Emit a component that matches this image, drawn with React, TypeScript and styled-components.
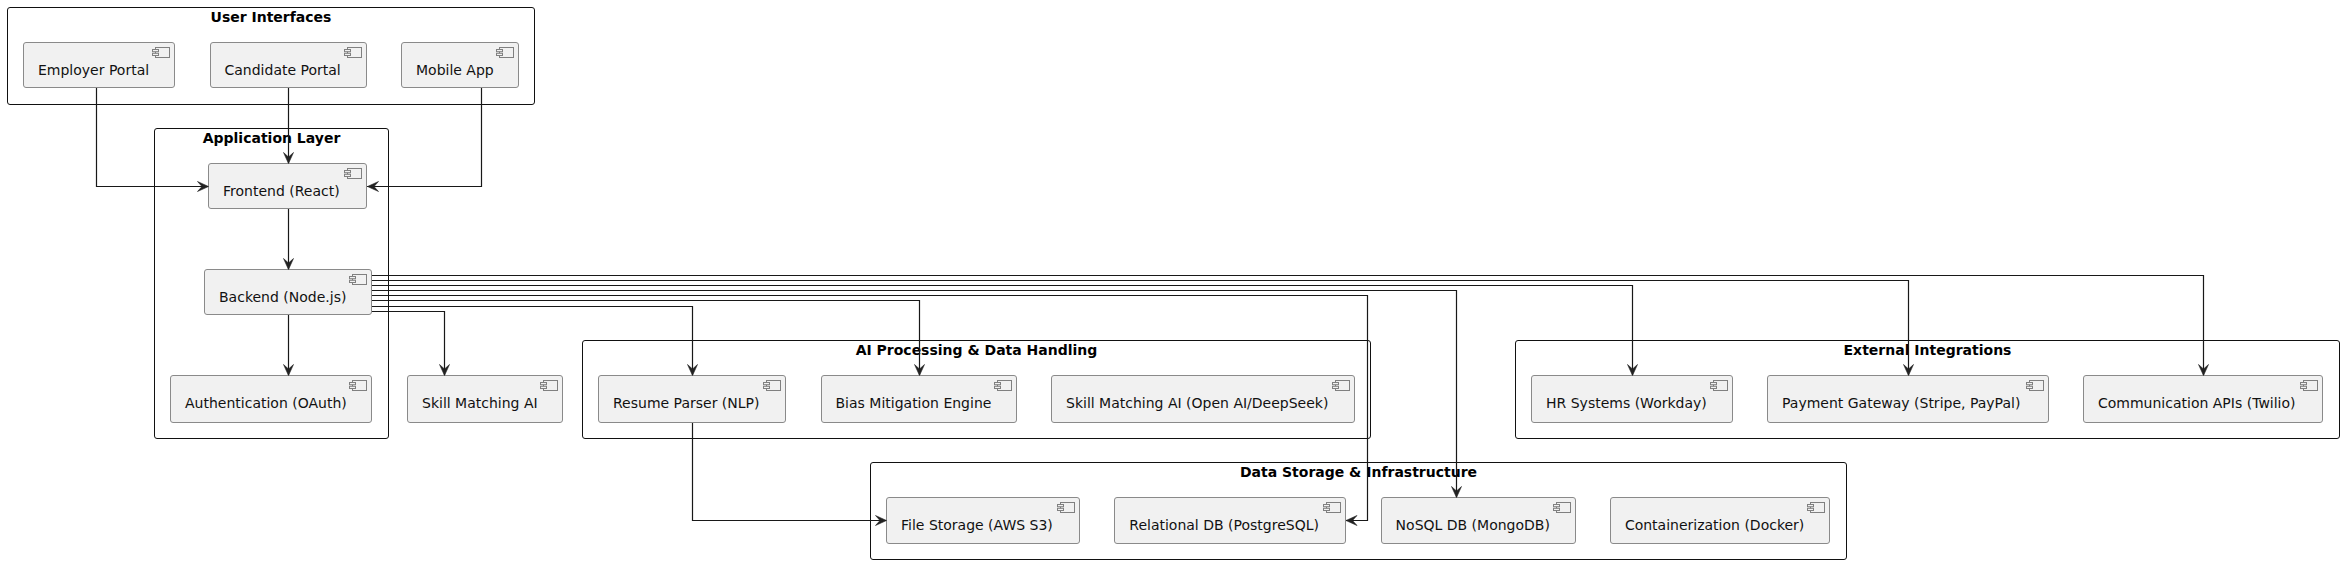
import React from 'react'
import styled, { createGlobalStyle } from 'styled-components'

interface NodeData {
  label: string
  w: number
  h: number
  inset?: number
}

interface GroupData {
  title: string
  x: number
  y: number
  w: number
  h: number
  gap: number
  stacked?: boolean
  nodes: NodeData[]
}

const groups: GroupData[] = [
  {
    title: 'User Interfaces',
    x: 7,
    y: 7,
    w: 528,
    h: 98,
    gap: 34.5,
    nodes: [
      { label: 'Employer Portal', w: 152, h: 46 },
      { label: 'Candidate Portal', w: 157, h: 46 },
      { label: 'Mobile App', w: 118, h: 46 },
    ],
  },
  {
    title: 'Application Layer',
    x: 154,
    y: 128,
    w: 235,
    h: 311,
    gap: 60,
    stacked: true,
    nodes: [
      { label: 'Frontend (React)', w: 159, h: 46, inset: 5 },
      { label: 'Backend (Node.js)', w: 168, h: 46 },
      { label: 'Authentication (OAuth)', w: 202, h: 48 },
    ],
  },
  {
    title: 'AI Processing & Data Handling',
    x: 582,
    y: 340,
    w: 789,
    h: 99,
    gap: 34.5,
    nodes: [
      { label: 'Resume Parser (NLP)', w: 188, h: 48 },
      { label: 'Bias Mitigation Engine', w: 196, h: 48 },
      { label: 'Skill Matching AI (Open AI/DeepSeek)', w: 304, h: 48 },
    ],
  },
  {
    title: 'External Integrations',
    x: 1515,
    y: 340,
    w: 825,
    h: 99,
    gap: 34,
    nodes: [
      { label: 'HR Systems (Workday)', w: 202, h: 48 },
      { label: 'Payment Gateway (Stripe, PayPal)', w: 282, h: 48 },
      { label: 'Communication APIs (Twilio)', w: 240, h: 48 },
    ],
  },
  {
    title: 'Data Storage & Infrastructure',
    x: 870,
    y: 462,
    w: 977,
    h: 98,
    gap: 34.3,
    nodes: [
      { label: 'File Storage (AWS S3)', w: 194, h: 47 },
      { label: 'Relational DB (PostgreSQL)', w: 232, h: 47 },
      { label: 'NoSQL DB (MongoDB)', w: 195, h: 47 },
      { label: 'Containerization (Docker)', w: 220, h: 47 },
    ],
  },
]

type Dir = 'down' | 'left' | 'right'

// polyline points, the tip is where the arrow head ends
const edges: { points: string; tip: [number, number]; dir: Dir }[] = [
  { points: '96.5,88 96.5,186.5 208,186.5', tip: [208.5, 186.5], dir: 'right' },
  { points: '288.5,88 288.5,163', tip: [288.5, 163.5], dir: 'down' },
  { points: '481.5,88 481.5,186.5 367,186.5', tip: [367.5, 186.5], dir: 'left' },
  { points: '288.5,209 288.5,269', tip: [288.5, 269.5], dir: 'down' },
  { points: '288.5,315 288.5,375', tip: [288.5, 375.5], dir: 'down' },
  { points: '372,311.5 444.5,311.5 444.5,375', tip: [444.5, 375.5], dir: 'down' },
  { points: '372,306.5 692.5,306.5 692.5,375', tip: [692.5, 375.5], dir: 'down' },
  { points: '372,300.5 919.5,300.5 919.5,375', tip: [919.5, 375.5], dir: 'down' },
  { points: '372,295.5 1367.5,295.5 1367.5,520.5 1346,520.5', tip: [1346, 520.5], dir: 'left' },
  { points: '372,290.5 1456.5,290.5 1456.5,497', tip: [1456.5, 497.5], dir: 'down' },
  { points: '372,285.5 1632.5,285.5 1632.5,375', tip: [1632.5, 375.5], dir: 'down' },
  { points: '372,280.5 1908.5,280.5 1908.5,375', tip: [1908.5, 375.5], dir: 'down' },
  { points: '372,275.5 2203.5,275.5 2203.5,375', tip: [2203.5, 375.5], dir: 'down' },
  { points: '692.5,423 692.5,520.5 886,520.5', tip: [886.5, 520.5], dir: 'right' },
]

const headPath = ([x, y]: [number, number], dir: Dir) => {
  if (dir === 'down') {
    return `M${x},${y} L${x + 5},${y - 11} L${x},${y - 6.5} L${x - 5},${y - 11} Z`
  }
  if (dir === 'right') {
    return `M${x},${y} L${x - 11},${y + 5} L${x - 6.5},${y} L${x - 11},${y - 5} Z`
  }
  return `M${x},${y} L${x + 11},${y + 5} L${x + 6.5},${y} L${x + 11},${y - 5} Z`
}

const DiagramNode: React.FC<{ node: NodeData }> = ({ node }) => (
  <NodeBox $w={node.w} $h={node.h} $inset={node.inset ?? 0}>
    <IconSvg viewBox="0 0 18 11" width="18" height="11">
      <rect x="3.5" y="0.5" width="14" height="10" />
      <rect x="0.5" y="2.5" width="6" height="2.2" />
      <rect x="0.5" y="6.3" width="6" height="2.2" />
    </IconSvg>
    <NodeLabel>{node.label}</NodeLabel>
  </NodeBox>
)

const App: React.FC = () => {
  return (
    <Canvas>
      <GlobalStyle />
      {groups.map(group => (
        <GroupBox key={group.title} $x={group.x} $y={group.y} $w={group.w} $h={group.h}>
          <GroupTitle>{group.title}</GroupTitle>
          <NodeList $gap={group.gap} $stacked={!!group.stacked}>
            {group.nodes.map(node => (
              <DiagramNode key={node.label} node={node} />
            ))}
          </NodeList>
        </GroupBox>
      ))}
      <LooseSlot>
        <DiagramNode node={{ label: 'Skill Matching AI', w: 156, h: 48 }} />
      </LooseSlot>
      <EdgeLayer viewBox="0 0 2344 564" width="2344" height="564">
        {edges.map(edge => (
          <g key={edge.points}>
            <polyline points={edge.points} />
            <path d={headPath(edge.tip, edge.dir)} />
          </g>
        ))}
      </EdgeLayer>
    </Canvas>
  )
}

export default App

const GlobalStyle = createGlobalStyle`
  html, body {
    margin: 0;
    background: #ffffff;
  }
  body {
    font-family: "DejaVu Sans", sans-serif;
  }
`
const Canvas = styled.div`
  position: relative;
  width: 2344px;
  height: 564px;
  overflow: hidden;
  background: #ffffff;
`
const GroupBox = styled.div<{ $x: number; $y: number; $w: number; $h: number }>`
  position: absolute;
  left: ${p => p.$x}px;
  top: ${p => p.$y}px;
  width: ${p => p.$w}px;
  height: ${p => p.$h}px;
  box-sizing: border-box;
  display: flex;
  flex-direction: column;
  gap: 16px;
  border: 1px solid #111111;
  border-radius: 3px;
`
const GroupTitle = styled.div`
  text-align: center;
  font-size: 14px;
  font-weight: bold;
  line-height: 18px;
  color: #000000;
`
const NodeList = styled.div<{ $gap: number; $stacked: boolean }>`
  display: flex;
  flex-direction: ${p => (p.$stacked ? 'column' : 'row')};
  align-items: ${p => (p.$stacked ? 'flex-end' : 'flex-start')};
  gap: ${p => p.$gap}px;
  padding: 0 16px 0 15px;
`
const LooseSlot = styled.div`
  position: absolute;
  left: 407px;
  top: 375px;
`
const NodeBox = styled.div<{ $w: number; $h: number; $inset: number }>`
  position: relative;
  flex: none;
  width: ${p => p.$w}px;
  height: ${p => p.$h}px;
  margin-right: ${p => p.$inset}px;
  box-sizing: border-box;
  padding: 17px 0 0 14px;
  background: #f1f1f1;
  border: 1px solid #8a8a8a;
  border-radius: 3px;
`
const NodeLabel = styled.div`
  font-size: 14px;
  line-height: 20px;
  color: #111111;
  white-space: nowrap;
`
const IconSvg = styled.svg`
  position: absolute;
  top: 4px;
  right: 4px;
  fill: #f1f1f1;
  stroke: #808080;
  stroke-width: 1;
`
const EdgeLayer = styled.svg`
  position: absolute;
  inset: 0;
  pointer-events: none;
  polyline {
    fill: none;
    stroke: #181818;
    stroke-width: 1.2;
  }
  path {
    fill: #222222;
    stroke: #222222;
    stroke-width: 0.6;
  }
`
